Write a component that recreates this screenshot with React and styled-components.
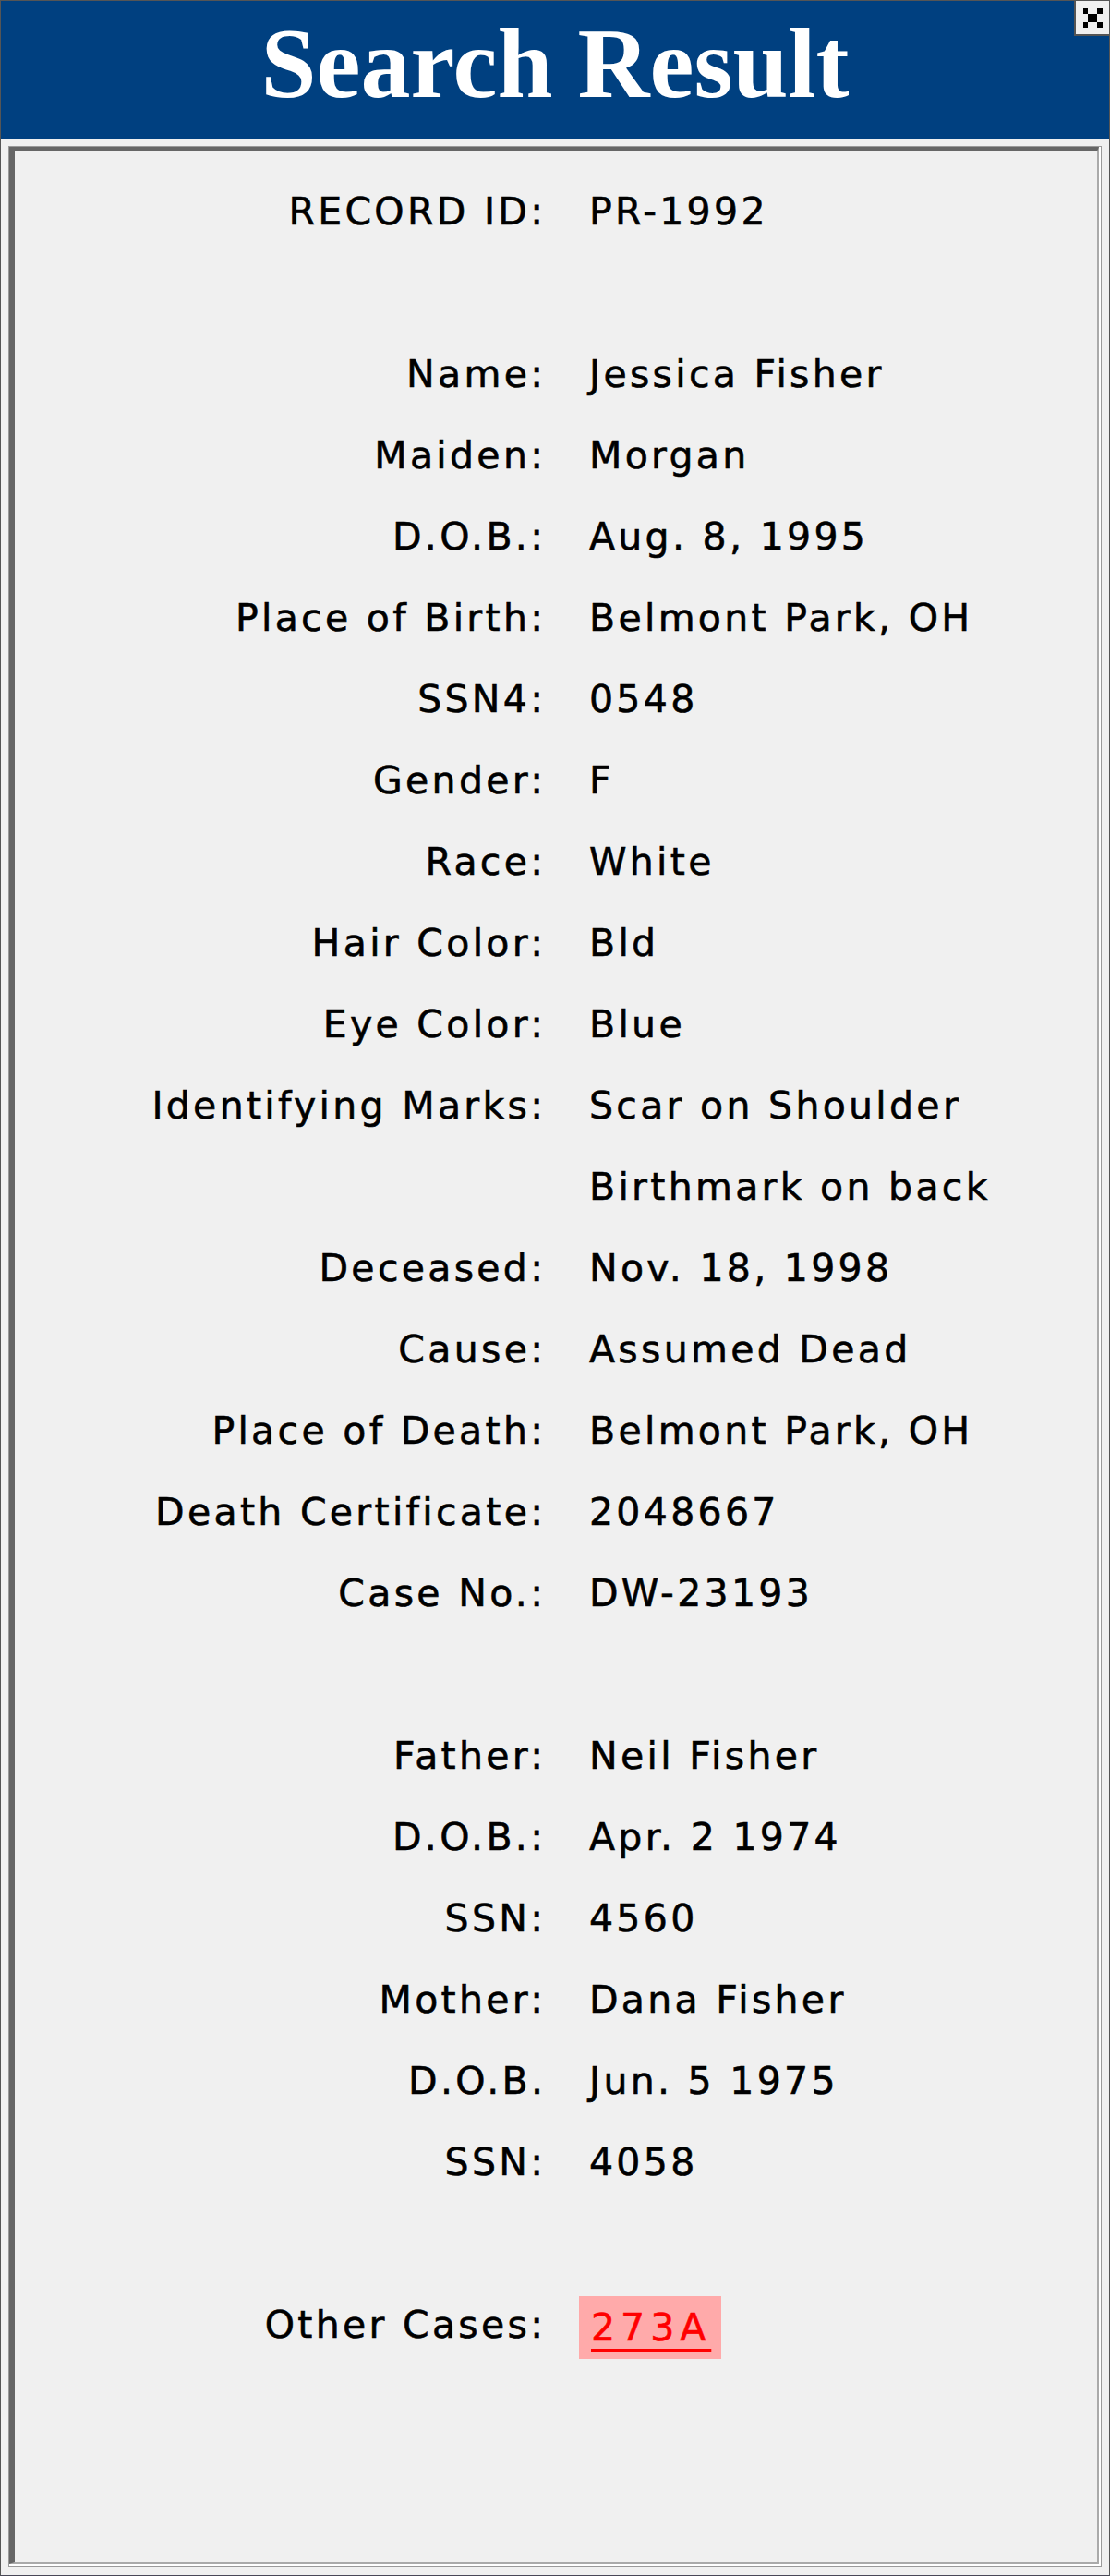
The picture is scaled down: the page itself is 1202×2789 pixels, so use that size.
import React from "react";
import styled, { createGlobalStyle } from "styled-components";

const GlobalStyle = createGlobalStyle`
  html, body {
    margin: 0;
    padding: 0;
    background: #f0f0f0;
  }
`;

const LS = 3.3;

const record = [
  ["RECORD ID:", "PR-1992"],
  null,
  ["Name:", "Jessica Fisher"],
  ["Maiden:", "Morgan"],
  ["D.O.B.:", "Aug. 8, 1995"],
  ["Place of Birth:", "Belmont Park, OH"],
  ["SSN4:", "0548"],
  ["Gender:", "F"],
  ["Race:", "White"],
  ["Hair Color:", "Bld"],
  ["Eye Color:", "Blue"],
  ["Identifying Marks:", "Scar on Shoulder"],
  ["", "Birthmark on back"],
  ["Deceased:", "Nov. 18, 1998"],
  ["Cause:", "Assumed Dead"],
  ["Place of Death:", "Belmont Park, OH"],
  ["Death Certificate:", "2048667"],
  ["Case No.:", "DW-23193"],
  null,
  ["Father:", "Neil Fisher"],
  ["D.O.B.:", "Apr. 2 1974"],
  ["SSN:", "4560"],
  ["Mother:", "Dana Fisher"],
  ["D.O.B.", "Jun. 5 1975"],
  ["SSN:", "4058"],
  null,
];

const Window = styled.div`
  position: relative;
  box-sizing: border-box;
  width: 1202px;
  height: 2789px;
  border: 1px solid #555;
  border-bottom-color: #4a4858;
  background: #f0f0f0;
  display: flex;
  flex-direction: column;
`;

const Header = styled.div`
  height: 150px;
  flex: none;
  background: #004080;
  box-sizing: border-box;
  padding-top: 14px;
  text-align: center;
`;

const Title = styled.h1`
  margin: 0;
  font-family: "Liberation Serif", "Times New Roman", serif;
  font-weight: bold;
  font-size: 108px;
  line-height: 1;
  color: #fff;
`;

const CloseButton = styled.button`
  position: absolute;
  top: 0;
  right: 0;
  width: 38px;
  height: 38px;
  padding: 0;
  border: none;
  border-left: 2px solid #555;
  border-bottom: 2px solid #555;
  background: #f0f0f0;
  display: flex;
  align-items: center;
  justify-content: center;
  cursor: pointer;
`;

const Panel = styled.div`
  flex: 1;
  padding: 7px 8px 9px 8px;
  display: flex;
`;

const Groove = styled.div`
  flex: 1;
  display: flex;
  background: #fff;
  border: 1px solid #9a9a9a;
  padding: 0 2px 2px 0;
`;

const Inset = styled.div`
  flex: 1;
  background: #f0f0f0;
  border-top: 5px solid #666;
  border-left: 6px solid #666;
  border-right: 2px solid #aaa;
  border-bottom: 2px solid #aaa;
  padding-top: 21px;
`;

const Row = styled.div`
  display: grid;
  grid-template-columns: ${572 + LS}px 1fr;
  column-gap: ${50 - LS}px;
  height: 88px;
  line-height: 88px;
  font-family: "DejaVu Sans", Verdana, sans-serif;
  font-size: 41px;
  letter-spacing: ${LS}px;
  color: #000;
  -webkit-text-stroke: 0.6px #000;
  white-space: nowrap;
`;

const Label = styled.span`
  text-align: right;
`;

const Value = styled.span``;

const CaseLink = styled.a`
  display: inline-block;
  margin-left: -11px;
  padding: 0 11px 0 13px;
  height: 68px;
  line-height: 68px;
  vertical-align: middle;
  letter-spacing: 6px;
  background: #ffaaaa;
  color: #ff0000;
  -webkit-text-stroke: 0.6px #ff0000;
  text-decoration: underline;
  text-decoration-thickness: 3px;
  text-underline-offset: 9px;
  cursor: pointer;
`;

const CloseIcon = () => (
  <svg width="21" height="21" viewBox="0 0 21 21">
    <rect x="0" y="0" width="5" height="6" fill="#000" />
    <rect x="15" y="0" width="6" height="6" fill="#000" />
    <rect x="5" y="6" width="10" height="9" fill="#000" />
    <rect x="0" y="15" width="5" height="6" fill="#000" />
    <rect x="15" y="15" width="6" height="6" fill="#000" />
  </svg>
);

export default function App() {
  return (
    <>
      <GlobalStyle />
      <Window>
        <Header>
          <Title>Search Result</Title>
        </Header>
        <CloseButton aria-label="Close">
          <CloseIcon />
        </CloseButton>
        <Panel>
          <Groove>
            <Inset>
              {record.map((r, i) =>
                r ? (
                  <Row key={i}>
                    <Label>{r[0]}</Label>
                    <Value>{r[1]}</Value>
                  </Row>
                ) : (
                  <Row key={i} />
                )
              )}
              <Row>
                <Label>Other Cases:</Label>
                <Value>
                  <CaseLink>273A</CaseLink>
                </Value>
              </Row>
            </Inset>
          </Groove>
        </Panel>
      </Window>
    </>
  );
}
